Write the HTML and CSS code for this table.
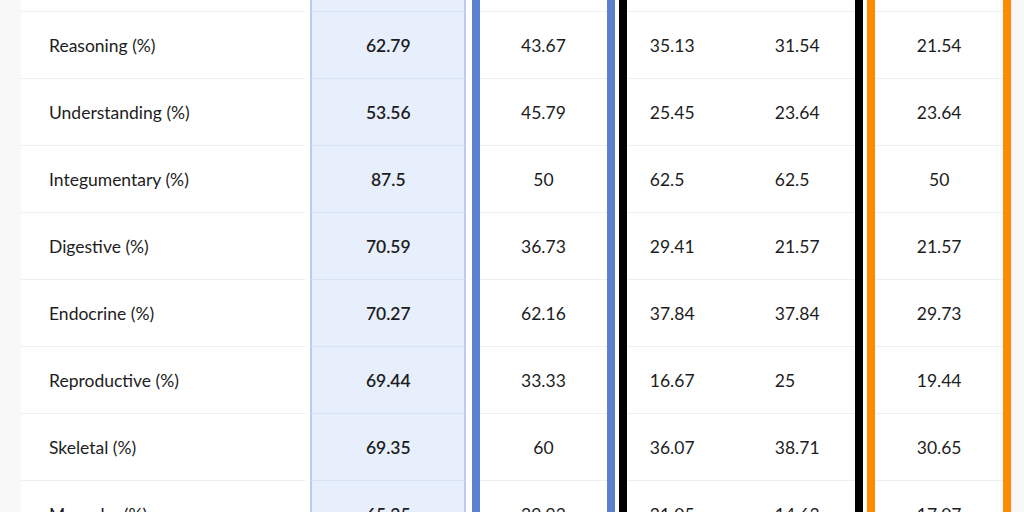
FILE: index.html
```html
<!DOCTYPE html>
<html>
<head>
<meta charset="utf-8">
<link rel="stylesheet" href="styles.css">
</head>
<body>
<div class="table">
  <div class="row">
    <div class="c label"></div>
    <div class="c hl"></div>
    <div class="grp blue"><div class="c mid"></div></div>
    <div class="grp black"><div class="c s1"></div><div class="c s2"></div></div>
    <div class="grp orange"><div class="c mid"></div></div>
  </div>
  <div class="row">
    <div class="c label">Reasoning (%)</div>
    <div class="c hl">62.79</div>
    <div class="grp blue"><div class="c mid">43.67</div></div>
    <div class="grp black"><div class="c s1">35.13</div><div class="c s2">31.54</div></div>
    <div class="grp orange"><div class="c mid">21.54</div></div>
  </div>
  <div class="row">
    <div class="c label">Understanding (%)</div>
    <div class="c hl">53.56</div>
    <div class="grp blue"><div class="c mid">45.79</div></div>
    <div class="grp black"><div class="c s1">25.45</div><div class="c s2">23.64</div></div>
    <div class="grp orange"><div class="c mid">23.64</div></div>
  </div>
  <div class="row">
    <div class="c label">Integumentary (%)</div>
    <div class="c hl">87.5</div>
    <div class="grp blue"><div class="c mid">50</div></div>
    <div class="grp black"><div class="c s1">62.5</div><div class="c s2">62.5</div></div>
    <div class="grp orange"><div class="c mid">50</div></div>
  </div>
  <div class="row">
    <div class="c label">Digestive (%)</div>
    <div class="c hl">70.59</div>
    <div class="grp blue"><div class="c mid">36.73</div></div>
    <div class="grp black"><div class="c s1">29.41</div><div class="c s2">21.57</div></div>
    <div class="grp orange"><div class="c mid">21.57</div></div>
  </div>
  <div class="row">
    <div class="c label">Endocrine (%)</div>
    <div class="c hl">70.27</div>
    <div class="grp blue"><div class="c mid">62.16</div></div>
    <div class="grp black"><div class="c s1">37.84</div><div class="c s2">37.84</div></div>
    <div class="grp orange"><div class="c mid">29.73</div></div>
  </div>
  <div class="row">
    <div class="c label">Reproductive (%)</div>
    <div class="c hl">69.44</div>
    <div class="grp blue"><div class="c mid">33.33</div></div>
    <div class="grp black"><div class="c s1">16.67</div><div class="c s2">25</div></div>
    <div class="grp orange"><div class="c mid">19.44</div></div>
  </div>
  <div class="row">
    <div class="c label">Skeletal (%)</div>
    <div class="c hl">69.35</div>
    <div class="grp blue"><div class="c mid">60</div></div>
    <div class="grp black"><div class="c s1">36.07</div><div class="c s2">38.71</div></div>
    <div class="grp orange"><div class="c mid">30.65</div></div>
  </div>
  <div class="row">
    <div class="c label">Muscular (%)</div>
    <div class="c hl">65.25</div>
    <div class="grp blue"><div class="c mid">29.93</div></div>
    <div class="grp black"><div class="c s1">21.05</div><div class="c s2">14.63</div></div>
    <div class="grp orange"><div class="c mid">17.07</div></div>
  </div>
</div>
</body>
</html>
```
FILE: styles.css
```css
html, body {
  margin: 0;
  padding: 0;
  background: #f8f8f8;
  overflow: hidden;
  height: 512px;
}
.table {
  margin-left: 21px;
  margin-top: -55px;
  width: 990px;
  background: #ffffff;
  font-family: Lato, "Open Sans", sans-serif;
  font-size: 17.5px;
  color: #1c1d22;
}
.row {
  display: flex;
}
.c {
  height: 66px;
  border-bottom: 1px solid #eceef2;
  display: flex;
  align-items: center;
}
.label {
  width: 257px;
  padding-left: 28px;
}
.hl {
  margin-left: 5px;
  width: 152px;
  justify-content: center;
  background: #e8effc;
  border-left: 2px solid #b9cbef;
  border-right: 2px solid #b9cbef;
  border-bottom-color: #d9e3f6;
  font-weight: 600;
}
.grp {
  display: flex;
  border-left: 8px solid;
  border-right: 8px solid;
}
.blue {
  margin-left: 6px;
  width: 127px;
  border-color: #5b80d0;
}
.black {
  margin-left: 4px;
  width: 229px;
  border-color: #000000;
}
.orange {
  margin-left: 4px;
  width: 128px;
  border-color: #ff8c00;
}
.mid {
  flex: 1;
  justify-content: center;
}
.s1 {
  width: 102px;
  padding-left: 23px;
}
.s2 {
  flex: 1;
  padding-left: 23px;
}
```
